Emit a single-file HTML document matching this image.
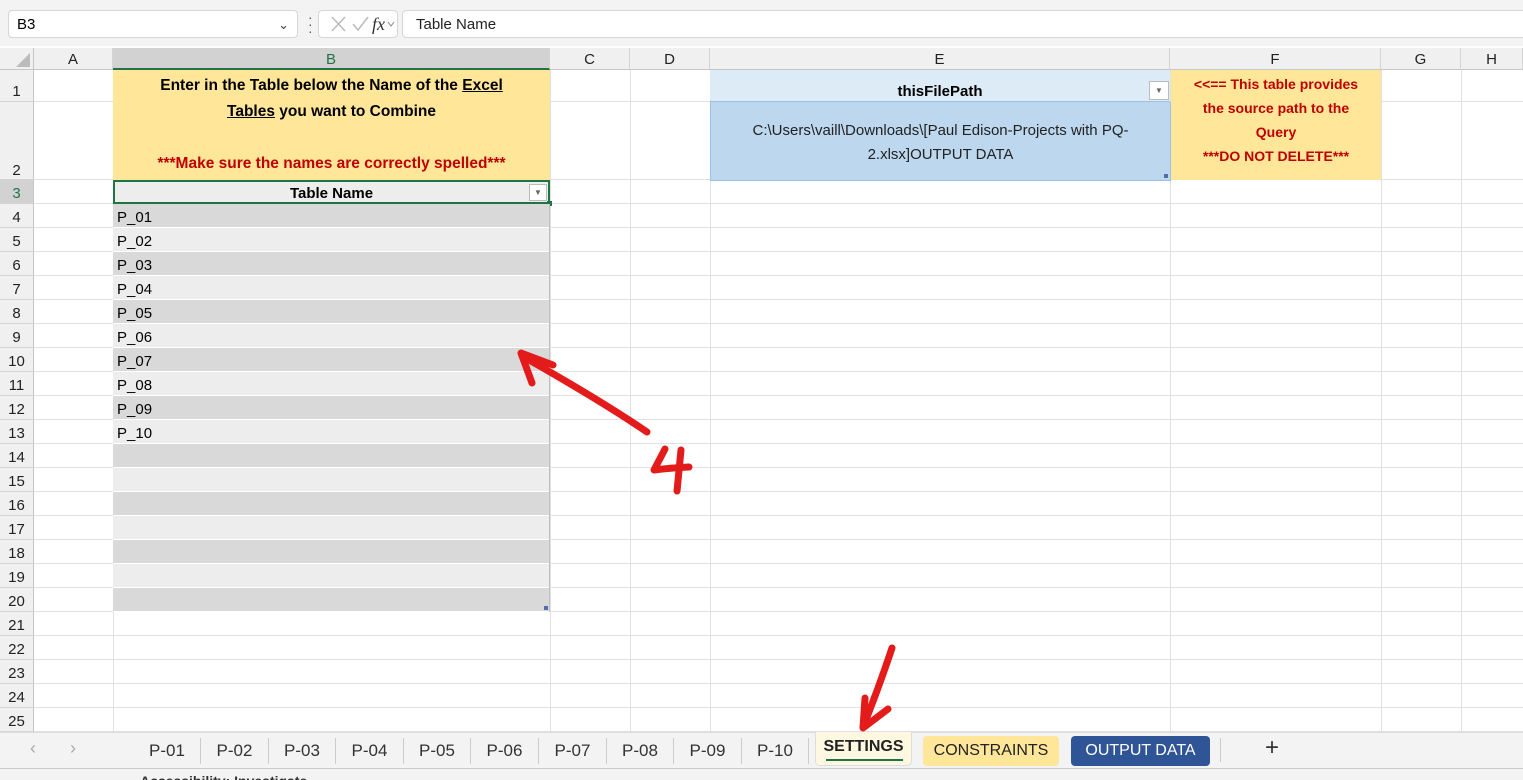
<!DOCTYPE html>
<html><head><meta charset="utf-8"><style>
*{box-sizing:border-box;margin:0;padding:0}
body{width:1523px;height:780px;overflow:hidden;background:#fff;font-family:"Liberation Sans",sans-serif;position:relative;font-size:15px;color:#000}
.a{position:absolute}
.ch{position:absolute;top:48px;height:22px;background:#f0f0f0;border-right:1px solid #d4d4d4;border-bottom:1px solid #c6c6c6;text-align:center;line-height:24px;font-size:15px;color:#222}
.rh{position:absolute;left:0;width:34px;background:#f0f0f0;border-bottom:1px solid #d4d4d4;border-right:1px solid #c6c6c6;text-align:center;font-size:15px;color:#222}
.hl{position:absolute;left:34px;width:1489px;height:1px;background:#e1e1e1}
.vl{position:absolute;top:70px;height:662px;width:1px;background:#e1e1e1}
.tc{position:absolute;left:113px;width:437px;height:24px;border-bottom:1px solid #fff;padding-left:4px;line-height:28px;font-size:15px}
.tab{position:absolute;top:738px;height:26px;line-height:26px;font-size:17px;color:#333;text-align:center;border-right:1px solid #ccc}
</style></head><body>
<div class="a" style="left:0;top:0;width:1523px;height:46px;background:#f3f3f3"></div>
<div class="a" style="left:8px;top:10px;width:290px;height:28px;background:#fff;border:1px solid #d6d6d6;border-radius:4px;font-size:15px;line-height:28px;padding-left:8px">B3<span class="a" style="right:8px;top:0;font-size:13px;color:#444">&#8964;</span></div>
<div class="a" style="left:308px;top:14px;width:3px;height:20px;color:#555;font-size:14px;line-height:7px">·<br>·<br>·</div>
<div class="a" style="left:318px;top:10px;width:80px;height:28px;background:#fff;border:1px solid #d6d6d6;border-radius:4px"></div>
<svg class="a" style="left:318px;top:10px" width="80" height="28"><path d="M14 7L27 21M27 7L14 21" stroke="#bbb" stroke-width="1.5" fill="none"/><path d="M35 14l5 6 10-13" stroke="#bbb" stroke-width="1.5" fill="none"/><text x="54" y="20" font-family="Liberation Serif" font-style="italic" font-size="18" fill="#333">fx</text><path d="M70 12l3 4 3-4" stroke="#888" fill="none"/></svg>
<div class="a" style="left:402px;top:10px;width:1130px;height:28px;background:#fff;border:1px solid #d6d6d6;border-radius:4px;line-height:28px;padding-left:13px;font-size:15px;color:#222">Table Name</div>
<div class="a" style="left:0;top:48px;width:34px;height:22px;background:#f0f0f0;border-right:1px solid #c6c6c6;border-bottom:1px solid #c6c6c6"></div>
<svg class="a" style="left:14px;top:52px" width="18" height="16"><path d="M16 1V15H2Z" fill="#bbb"/></svg>
<div class="ch" style="left:34px;width:79px">A</div>
<div class="ch" style="left:113px;width:437px;background:#d2d2d2;color:#217346;border-bottom:2px solid #217346">B</div>
<div class="ch" style="left:550px;width:80px">C</div>
<div class="ch" style="left:630px;width:80px">D</div>
<div class="ch" style="left:710px;width:460px">E</div>
<div class="ch" style="left:1170px;width:211px">F</div>
<div class="ch" style="left:1381px;width:80px">G</div>
<div class="ch" style="left:1461px;width:62px">H</div>
<div class="vl" style="left:113px"></div><div class="vl" style="left:550px"></div><div class="vl" style="left:630px"></div><div class="vl" style="left:710px"></div><div class="vl" style="left:1170px"></div><div class="vl" style="left:1381px"></div><div class="vl" style="left:1461px"></div>
<div class="hl" style="top:101px"></div><div class="hl" style="top:179px"></div><div class="hl" style="top:203px"></div><div class="hl" style="top:227px"></div><div class="hl" style="top:251px"></div><div class="hl" style="top:275px"></div><div class="hl" style="top:299px"></div><div class="hl" style="top:323px"></div><div class="hl" style="top:347px"></div><div class="hl" style="top:371px"></div><div class="hl" style="top:395px"></div><div class="hl" style="top:419px"></div><div class="hl" style="top:443px"></div><div class="hl" style="top:467px"></div><div class="hl" style="top:491px"></div><div class="hl" style="top:515px"></div><div class="hl" style="top:539px"></div><div class="hl" style="top:563px"></div><div class="hl" style="top:587px"></div><div class="hl" style="top:611px"></div><div class="hl" style="top:635px"></div><div class="hl" style="top:659px"></div><div class="hl" style="top:683px"></div><div class="hl" style="top:707px"></div><div class="hl" style="top:731px"></div>
<div class="rh" style="top:70px;height:32px;line-height:44px">1</div>
<div class="rh" style="top:102px;height:78px;line-height:138px">2</div>
<div class="rh" style="top:180px;height:24px;line-height:28px;background:#d2d2d2;color:#217346">3</div>
<div class="rh" style="top:204px;height:24px;line-height:28px">4</div>
<div class="rh" style="top:228px;height:24px;line-height:28px">5</div>
<div class="rh" style="top:252px;height:24px;line-height:28px">6</div>
<div class="rh" style="top:276px;height:24px;line-height:28px">7</div>
<div class="rh" style="top:300px;height:24px;line-height:28px">8</div>
<div class="rh" style="top:324px;height:24px;line-height:28px">9</div>
<div class="rh" style="top:348px;height:24px;line-height:28px">10</div>
<div class="rh" style="top:372px;height:24px;line-height:28px">11</div>
<div class="rh" style="top:396px;height:24px;line-height:28px">12</div>
<div class="rh" style="top:420px;height:24px;line-height:28px">13</div>
<div class="rh" style="top:444px;height:24px;line-height:28px">14</div>
<div class="rh" style="top:468px;height:24px;line-height:28px">15</div>
<div class="rh" style="top:492px;height:24px;line-height:28px">16</div>
<div class="rh" style="top:516px;height:24px;line-height:28px">17</div>
<div class="rh" style="top:540px;height:24px;line-height:28px">18</div>
<div class="rh" style="top:564px;height:24px;line-height:28px">19</div>
<div class="rh" style="top:588px;height:24px;line-height:28px">20</div>
<div class="rh" style="top:612px;height:24px;line-height:28px">21</div>
<div class="rh" style="top:636px;height:24px;line-height:28px">22</div>
<div class="rh" style="top:660px;height:24px;line-height:28px">23</div>
<div class="rh" style="top:684px;height:24px;line-height:28px">24</div>
<div class="rh" style="top:708px;height:24px;line-height:28px">25</div>
<div class="a" style="left:113px;top:70px;width:437px;height:110px;background:#ffe699;text-align:center;font-weight:bold;font-size:15.5px;line-height:26px;padding-top:3px">Enter in the Table below the Name of the <u>Excel </u><br><u>Tables</u> you want to Combine<br><br><span style="color:#c00000">***Make sure the names are correctly spelled***</span></div>
<div class="a" style="left:113px;top:180px;width:437px;height:24px;background:#ededed;border:2px solid #217346;text-align:center;font-weight:bold;line-height:24px;font-size:15px">Table Name</div>
<div class="a" style="left:529px;top:184px;width:18px;height:17px;background:#fff;border:1px solid #bbb;font-size:8px;color:#666;text-align:center;line-height:16px">▼</div>
<div class="a" style="left:547px;top:201px;width:5px;height:5px;background:#217346"></div>
<div class="tc" style="top:204px;background:#d9d9d9">P_01</div>
<div class="tc" style="top:228px;background:#ededed">P_02</div>
<div class="tc" style="top:252px;background:#d9d9d9">P_03</div>
<div class="tc" style="top:276px;background:#ededed">P_04</div>
<div class="tc" style="top:300px;background:#d9d9d9">P_05</div>
<div class="tc" style="top:324px;background:#ededed">P_06</div>
<div class="tc" style="top:348px;background:#d9d9d9">P_07</div>
<div class="tc" style="top:372px;background:#ededed">P_08</div>
<div class="tc" style="top:396px;background:#d9d9d9">P_09</div>
<div class="tc" style="top:420px;background:#ededed">P_10</div>
<div class="tc" style="top:444px;background:#d9d9d9"></div>
<div class="tc" style="top:468px;background:#ededed"></div>
<div class="tc" style="top:492px;background:#d9d9d9"></div>
<div class="tc" style="top:516px;background:#ededed"></div>
<div class="tc" style="top:540px;background:#d9d9d9"></div>
<div class="tc" style="top:564px;background:#ededed"></div>
<div class="tc" style="top:588px;background:#d9d9d9"></div>
<div class="a" style="left:549px;top:204px;width:1px;height:408px;background:#bfbfbf"></div>
<div class="a" style="left:544px;top:606px;width:4px;height:4px;background:#4f6fb5"></div>
<div class="a" style="left:710px;top:70px;width:460px;height:32px;background:#ddebf7;border-bottom:1px solid #9bc2e6;text-align:center;font-weight:bold;line-height:44px">thisFilePath</div>
<div class="a" style="left:1149px;top:81px;width:20px;height:19px;background:#fff;border:1px solid #bbb;font-size:8px;color:#666;text-align:center;line-height:18px">▼</div>
<div class="a" style="left:710px;top:102px;width:461px;height:79px;background:#bdd7ee;border:1px solid #9bc2e6;border-top:none;text-align:center;line-height:24px;padding-top:17px;font-size:15px;color:#222">C:\Users\vaill\Downloads\[Paul Edison-Projects with PQ-<br>2.xlsx]OUTPUT DATA</div>
<div class="a" style="left:1164px;top:174px;width:4px;height:4px;background:#4f6fb5"></div>
<div class="a" style="left:1171px;top:70px;width:210px;height:110px;background:#ffe699;color:#c00000;font-weight:bold;text-align:center;font-size:14px;line-height:24px;padding-top:2px">&lt;&lt;== This table provides<br>the source path to the<br>Query<br>***DO NOT DELETE***</div>
<svg class="a" style="left:0;top:0" width="1523" height="780">
<g stroke="#e31b1b" stroke-width="7" stroke-linecap="round" stroke-linejoin="round" fill="none">
<path d="M647 432 Q600 400 522 356"/><path d="M553 365 L521 353 L532 383"/>
<path d="M665 449 L654 470 Q670 468 689 467"/><path d="M681 450 Q679 470 677 491"/>
<path d="M892 648 Q878 690 863 727"/><path d="M865 698 L863 728 L888 709"/>
</g></svg>
<div class="a" style="left:0;top:732px;width:1523px;height:36px;background:#f3f3f3;border-top:1px solid #ddd"></div>
<div class="a" style="left:30px;top:738px;font-size:18px;color:#aaa">&#8249;</div>
<div class="a" style="left:70px;top:738px;font-size:18px;color:#aaa">&#8250;</div>
<div class="tab" style="left:134px;width:67px">P-01</div>
<div class="tab" style="left:201px;width:68px">P-02</div>
<div class="tab" style="left:269px;width:67px">P-03</div>
<div class="tab" style="left:336px;width:68px">P-04</div>
<div class="tab" style="left:404px;width:67px">P-05</div>
<div class="tab" style="left:471px;width:68px">P-06</div>
<div class="tab" style="left:539px;width:68px">P-07</div>
<div class="tab" style="left:607px;width:67px">P-08</div>
<div class="tab" style="left:674px;width:68px">P-09</div>
<div class="tab" style="left:742px;width:67px">P-10</div>
<div class="a" style="left:815px;top:732px;width:97px;height:34px;background:#fff8e1;border:1px solid #ddd;border-top:none;border-radius:0 0 5px 5px;text-align:center;font-weight:bold;font-size:16px;line-height:30px;color:#222">SETTINGS<div class="a" style="left:10px;top:27px;width:77px;height:2px;background:#217346"></div></div>
<div class="a" style="left:923px;top:736px;width:136px;height:30px;background:#ffe699;border-radius:4px;text-align:center;font-size:16px;line-height:30px;color:#222">CONSTRAINTS</div>
<div class="a" style="left:1071px;top:736px;width:139px;height:30px;background:#2f5597;border-radius:4px;text-align:center;font-size:16px;line-height:30px;color:#fff">OUTPUT DATA</div>
<div class="a" style="left:1220px;top:738px;width:1px;height:24px;background:#ccc"></div>
<div class="a" style="left:1265px;top:734px;font-size:24px;color:#333">+</div>
<div class="a" style="left:0;top:768px;width:1523px;height:12px;background:#f3f3f3;border-top:1px solid #ccc;overflow:hidden"><div class="a" style="left:140px;top:4px;font-size:14px;font-weight:bold;color:#333">Accessibility: Investigate</div></div>
</body></html>
